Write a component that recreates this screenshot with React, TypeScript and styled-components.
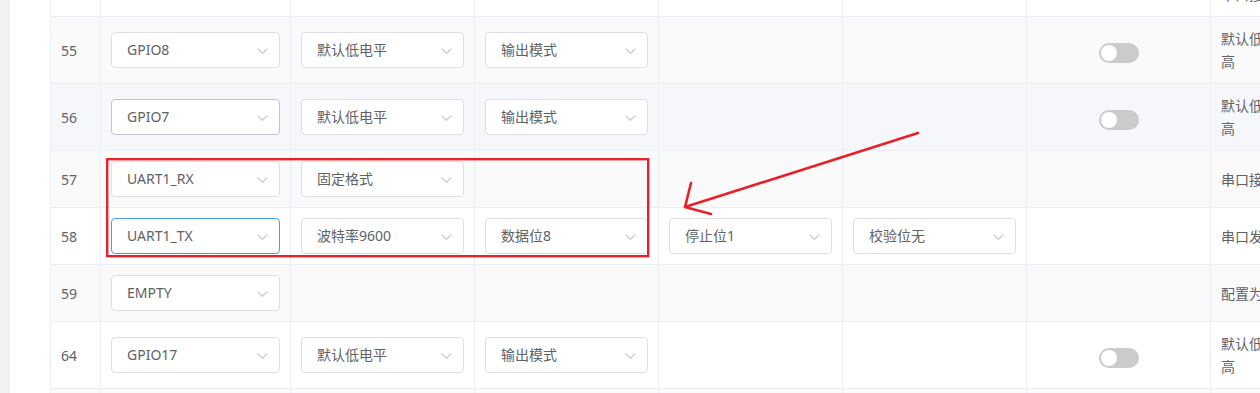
import styled, { createGlobalStyle } from 'styled-components'

const GlobalStyle = createGlobalStyle`
  html, body {
    margin: 0;
    padding: 0;
    overflow: hidden;
    background: #f0f2f5;
  }
  * {
    box-sizing: border-box;
  }
`

type RowTone = 'plain' | 'stripe' | 'hover'
type SelectState = 'normal' | 'hover' | 'focus'

interface Pin {
  index: string
  func?: { label: string; state?: SelectState }
  selects: string[]
  toggle?: boolean
  note: string
  tone: RowTone
}

const rows: Pin[] = [
  { index: '', selects: [], note: '引脚复用功能说明如下：串口接收', tone: 'plain' },
  { index: '55', func: { label: 'GPIO8' }, selects: ['默认低电平', '输出模式'], toggle: true, note: '默认低电平，可以配置为高', tone: 'stripe' },
  { index: '56', func: { label: 'GPIO7', state: 'hover' }, selects: ['默认低电平', '输出模式'], toggle: true, note: '默认低电平，可以配置为高', tone: 'hover' },
  { index: '57', func: { label: 'UART1_RX' }, selects: ['固定格式'], note: '串口接收引脚', tone: 'stripe' },
  { index: '58', func: { label: 'UART1_TX', state: 'focus' }, selects: ['波特率9600', '数据位8', '停止位1', '校验位无'], note: '串口发送引脚', tone: 'plain' },
  { index: '59', func: { label: 'EMPTY' }, selects: [], note: '配置为空引脚', tone: 'stripe' },
  { index: '64', func: { label: 'GPIO17' }, selects: ['默认低电平', '输出模式'], toggle: true, note: '默认低电平，可以配置为高', tone: 'plain' },
  { index: '65', func: { label: 'GPIO16' }, selects: ['默认低电平', '输出模式'], toggle: true, note: '默认低电平，可以配置为高', tone: 'stripe' },
]

const toneBg: Record<RowTone, string> = {
  plain: '#ffffff',
  stripe: '#fafafa',
  hover: '#f5f7fa',
}

const borderFor: Record<SelectState, string> = {
  normal: '#dcdfe6',
  hover: '#c0c4cc',
  focus: '#409eff',
}

const Page = styled.div`
  display: flex;
  height: 393px;
  padding-left: 10px;
  background: #f0f2f5;
  font-family: 'Noto Sans', 'Noto Sans CJK SC', sans-serif;
  font-size: 14px;
  color: #606266;
`

const Panel = styled.div`
  position: relative;
  flex: 1;
  background: #ffffff;
  padding-left: 40px;
  overflow: hidden;
`

// table is scrolled: the row above 55 is mostly out of view
const Table = styled.div`
  width: max-content;
  margin-top: -50px;
  border-left: 1px solid #ebeef5;
`

const Row = styled.div<{ $tone: RowTone }>`
  display: grid;
  grid-template-columns: 50px 190px repeat(6, 184px);
  border-bottom: 1px solid #ebeef5;
  background: ${(p) => toneBg[p.$tone]};
`

const Cell = styled.div<{ $center?: boolean }>`
  display: flex;
  align-items: center;
  justify-content: ${(p) => (p.$center ? 'center' : 'flex-start')};
  padding: 10px;
  border-right: 1px solid #ebeef5;
  line-height: 23px;
  min-height: 56px;
`

const Note = styled.div`
  width: 100%;
  line-height: 23px;
`

const SelectBox = styled.div<{ $state: SelectState }>`
  position: relative;
  width: 100%;
  height: 36px;
  padding: 0 30px 0 15px;
  border: 1px solid ${(p) => borderFor[p.$state]};
  border-radius: 4px;
  background: #ffffff;
  line-height: 34px;
  white-space: nowrap;
  overflow: hidden;
`

const Chevron = styled.svg`
  position: absolute;
  right: 11px;
  top: 15px;
`

const Switch = styled.span`
  position: relative;
  display: inline-block;
  width: 40px;
  height: 20px;
  margin-top: 5px;
  border-radius: 10px;
  background: #cbcbcb;

  &::after {
    content: '';
    position: absolute;
    left: 2px;
    top: 2px;
    width: 16px;
    height: 16px;
    border-radius: 50%;
    background: #ffffff;
  }
`

const Markup = styled.svg`
  position: absolute;
  left: -10px;
  top: 0;
  pointer-events: none;
`

const Select = ({ label, state = 'normal' }: { label: string; state?: SelectState }) => (
  <SelectBox $state={state}>
    {label}
    <Chevron width='11' height='6' viewBox='0 0 11 6'>
      <path d='M0.6 0.6 L5.5 5.2 L10.4 0.6' fill='none' stroke='#c0c4cc' strokeWidth='1.1' />
    </Chevron>
  </SelectBox>
)

const App = () => {
  return (
    <>
      <GlobalStyle />
      <Page>
        <Panel>
          <Table>
            {rows.map((row, i) => (
              <Row key={i} $tone={row.tone}>
                <Cell>{row.index}</Cell>
                <Cell>{row.func && <Select label={row.func.label} state={row.func.state} />}</Cell>
                {[0, 1, 2, 3].map((k) => (
                  <Cell key={k}>{row.selects[k] && <Select label={row.selects[k]} />}</Cell>
                ))}
                <Cell $center>{row.toggle && <Switch />}</Cell>
                <Cell>
                  <Note>{row.note}</Note>
                </Cell>
              </Row>
            ))}
          </Table>
          <Markup width='1260' height='393' viewBox='0 0 1260 393'>
            <rect x='107.2' y='159.2' width='541' height='97' fill='none' stroke='#e62129' strokeWidth='2.4' />
            <path
              d='M918 133 L685 207 M691 183 L685 207 L711 214'
              fill='none'
              stroke='#e62129'
              strokeWidth='2.6'
              strokeLinecap='round'
              strokeLinejoin='round'
            />
          </Markup>
        </Panel>
      </Page>
    </>
  )
}

export default App
